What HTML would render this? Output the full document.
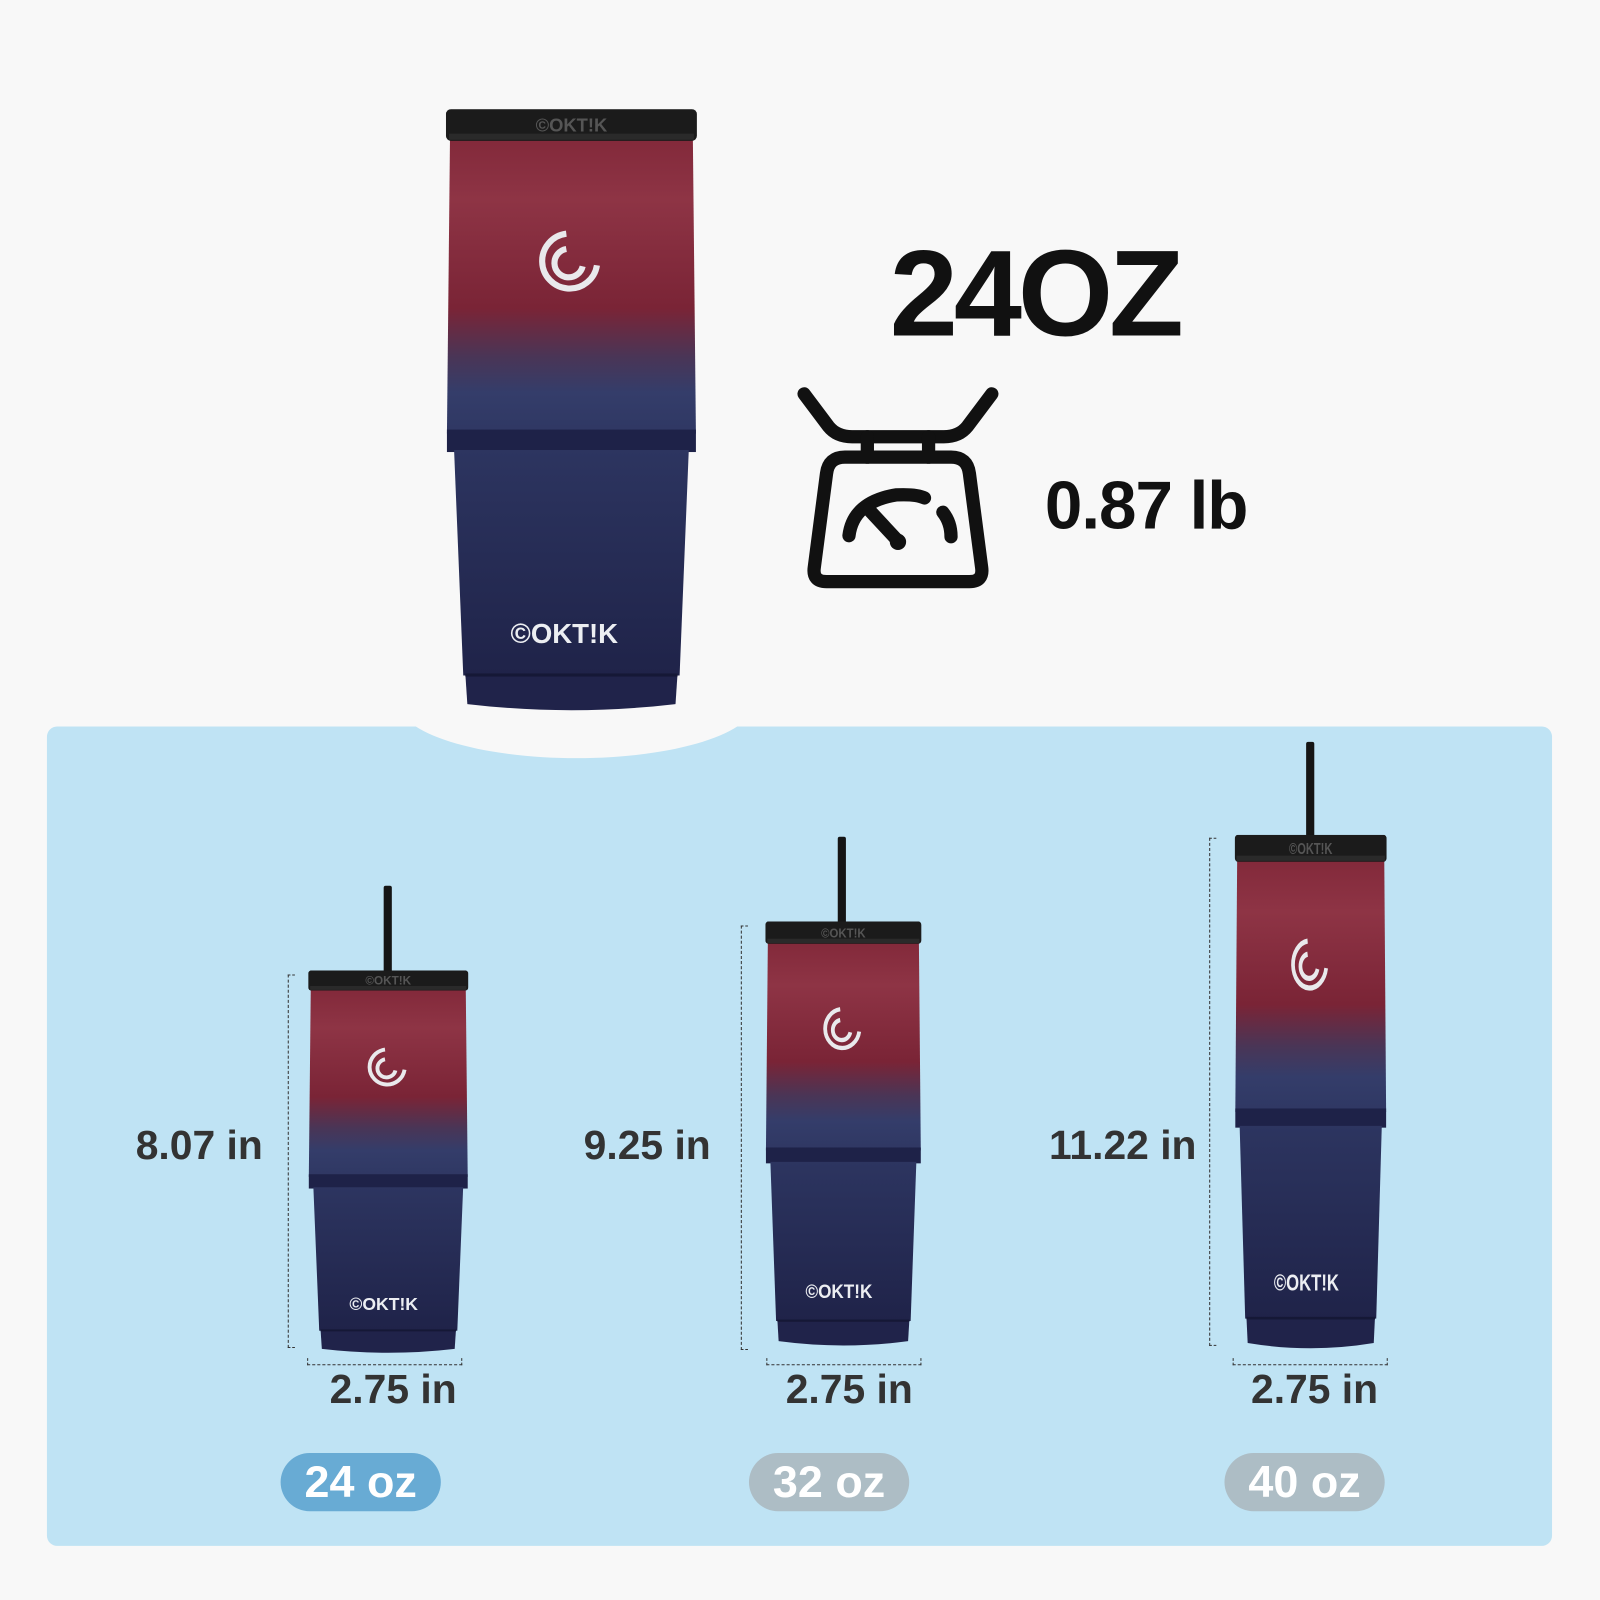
<!DOCTYPE html>
<html><head><meta charset="utf-8"><style>
html,body{margin:0;padding:0;background:#f8f8f8;}
body{width:1600px;height:1600px;overflow:hidden;position:relative;font-family:"Liberation Sans",sans-serif;}
#w{position:absolute;left:0;top:0;width:1568px;height:1568px;transform:scale(1.020408);transform-origin:0 0;}
.abs{position:absolute;}
.panel{left:46px;top:712px;width:1475px;height:803px;border-radius:10px;background:#bfe3f4;overflow:hidden;}
.notch{left:390px;top:633px;width:350px;height:110px;border-radius:50%;background:#f8f8f8;}
.straw{background:#151515;width:8px;border-radius:2px;}
.dim{color:#333;font-weight:bold;font-size:40px;white-space:nowrap;line-height:1;}
.vd{border-left:1.5px dashed #333;border-top:1.5px dashed #333;border-bottom:1.5px dashed #333;width:6px;}
.hd{border-bottom:1.5px dashed #333;border-left:1.5px dashed #333;border-right:1.5px dashed #333;height:6px;}
.pill{height:57px;border-radius:29px;color:#fff;font-weight:bold;font-size:44px;text-align:center;line-height:57px;}
svg.t{position:absolute;}
</style></head><body><div id="w">
<svg width="0" height="0" style="position:absolute"><defs>
<linearGradient id="g" gradientUnits="userSpaceOnUse" x1="0" y1="0" x2="0" y2="591">
<stop offset="0" stop-color="#7d2435"/><stop offset="0.15" stop-color="#8e3445"/><stop offset="0.33" stop-color="#7a2436"/><stop offset="0.41" stop-color="#4a3556"/><stop offset="0.47" stop-color="#343d6a"/><stop offset="0.58" stop-color="#2c345f"/><stop offset="1" stop-color="#1d2045"/></linearGradient>
<symbol id="tb" viewBox="0 0 246 591" preserveAspectRatio="none">
<path d="M4 28 L242 28 L245 318 L1 318 Z" fill="url(#g)"/>
<rect x="1" y="314" width="244" height="22" fill="#1e2248"/>
<path d="M8 334 L238 334 L229 555 L17 555 Z" fill="url(#g)"/>
<path d="M19 553 L227 553 L225 583 Q123 595 21 583 Z" fill="#20234a"/>
<rect x="19" y="553" width="208" height="3" fill="#151836"/>
<rect x="0" y="0" width="246" height="31" rx="5" fill="#1b1b1b"/>
<rect x="3" y="24" width="240" height="6" fill="#2a2a2a"/>
<text x="123" y="22" font-size="18" font-weight="bold" fill="#555" text-anchor="middle" font-family="Liberation Sans">©OKT!K</text>
<g fill="none" stroke="#e9e9ec" stroke-width="6" stroke-linecap="butt">
<path d="M118 122 A27 27 0 1 0 148 153"/>
<path d="M118 137 A14 14 0 1 0 134 154"/>
</g>
<text x="116" y="523" font-size="27" font-weight="bold" fill="#eceef2" text-anchor="middle" font-family="Liberation Sans">©OKT!K</text>
</symbol></defs></svg>

<div class="abs panel"></div>
<div class="abs notch"></div>

<svg class="t" style="left:437px;top:107px" width="246" height="591"><use href="#tb"/></svg>

<div class="abs" style="left:872px;top:228px;font-size:120px;font-weight:bold;color:#111;letter-spacing:-4px;line-height:1;">24OZ</div>
<svg class="abs" style="left:0;top:0" width="1568" height="700" viewBox="0 0 1568 700">
<g fill="none" stroke="#111" stroke-width="13" stroke-linecap="round" stroke-linejoin="round">
<path d="M788 386 L812 418 Q820 428 835 428 L925 428 Q940 428 948 418 L972 386"/>
<path d="M850 428 V448 M910 428 V448"/>
<path d="M828 448 L932 448 Q948 448 950 464 L962 556 Q964 570 950 570 L810 570 Q796 570 798 556 L810 464 Q812 448 828 448 Z"/>
<path d="M832 525 Q836 492 878 485 Q898 484 906 488"/>
<path d="M924 502 Q932 512 932 526"/>
<path d="M852 500 L878 528"/>
</g>
<circle cx="880" cy="531" r="8" fill="#111"/>
</svg>
<div class="abs" style="left:1024px;top:462px;font-size:66px;font-weight:bold;color:#111;line-height:1;letter-spacing:-1px;">0.87 lb</div>

<!-- T1 -->
<div class="abs straw" style="left:376px;top:868px;height:90px"></div>
<svg class="t" style="left:302px;top:951px" width="157" height="376"><use href="#tb"/></svg>
<div class="abs vd" style="left:282px;top:955px;height:364px"></div>
<div class="abs dim" style="left:133px;top:1103px">8.07 in</div>
<div class="abs hd" style="left:301px;top:1331px;width:150px"></div>
<div class="abs dim" style="left:323px;top:1342px">2.75 in</div>
<div class="abs pill" style="left:275px;top:1424px;width:157px;background:#68abd4">24 oz</div>

<!-- T2 -->
<div class="abs straw" style="left:821px;top:820px;height:90px"></div>
<svg class="t" style="left:750px;top:903px" width="153" height="417"><use href="#tb"/></svg>
<div class="abs vd" style="left:726px;top:907px;height:414px"></div>
<div class="abs dim" style="left:572px;top:1103px">9.25 in</div>
<div class="abs hd" style="left:751px;top:1331px;width:150px"></div>
<div class="abs dim" style="left:770px;top:1342px">2.75 in</div>
<div class="abs pill" style="left:734px;top:1424px;width:157px;background:#adbdc5">32 oz</div>

<!-- T3 -->
<div class="abs straw" style="left:1280px;top:727px;height:98px"></div>
<svg class="t" style="left:1210px;top:818px" width="149" height="505"><use href="#tb"/></svg>
<div class="abs vd" style="left:1185px;top:821px;height:496px"></div>
<div class="abs dim" style="left:1028px;top:1103px">11.22 in</div>
<div class="abs hd" style="left:1208px;top:1331px;width:150px"></div>
<div class="abs dim" style="left:1226px;top:1342px">2.75 in</div>
<div class="abs pill" style="left:1200px;top:1424px;width:157px;background:#adbdc5">40 oz</div>
</div></body></html>
